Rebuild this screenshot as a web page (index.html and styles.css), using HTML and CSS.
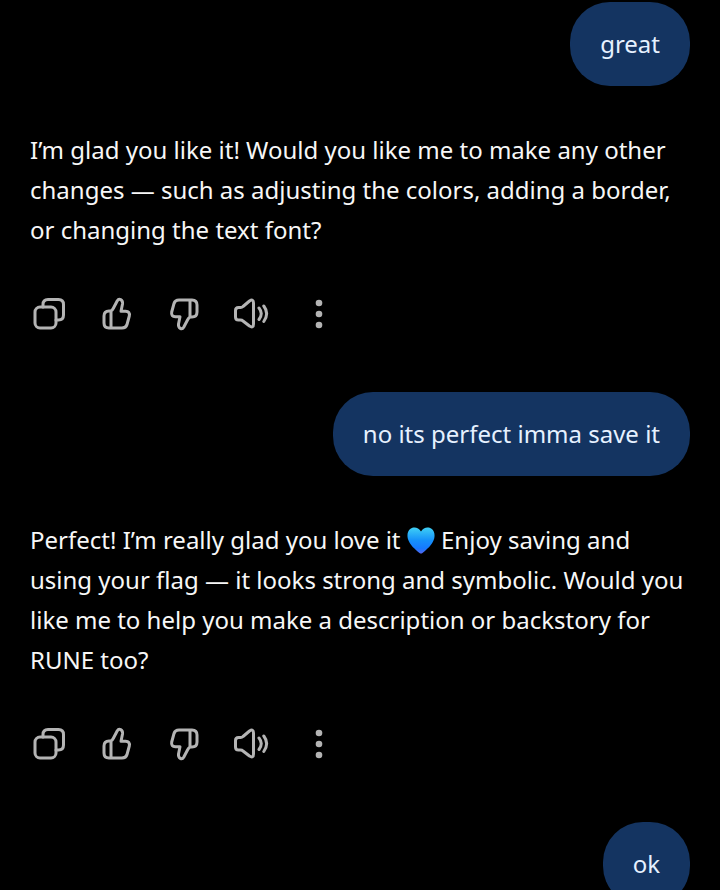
FILE: index.html
```html
<!DOCTYPE html>
<html lang="en">
<head>
  <meta charset="UTF-8" />
  <title>Chat</title>
  <meta name="viewport" content="width=device-width, initial-scale=1.0" />
  <link rel="stylesheet" href="styles.css">
</head>
<body>
  <!-- shared icons -->
  <svg class="sprite" aria-hidden="true">
    <symbol id="icon-copy" viewBox="0 0 40 40">
      <rect x="5" y="13" width="21" height="21" rx="5" />
      <path d="M13 13V10.5Q13 5.5 18 5.5H28.5Q33.5 5.5 33.5 10.5V21Q33.5 26 28.5 26H26" />
    </symbol>
    <symbol id="icon-thumb" viewBox="0 0 40 40">
      <path d="M14 17H12Q7 17 7 22V29Q7 34 12 34H25Q29 34 30 30.5L32.3 22Q33.2 17.5 28.5 17.2H24L25.5 10C26 5.5 22 4 20.3 6.8L16.5 14Q15.5 16 14 17V34" />
    </symbol>
    <symbol id="icon-speaker" viewBox="0 0 40 40">
      <path d="M7.500 13.500H9.500Q11 13.500 12 12.500L18.500 7Q22.500 4.500 22.500 9V30Q22.500 34.500 18.500 32L12 27Q11 26 9.500 26H7.500Q4.500 26 4.500 23V16.500Q4.500 13.500 7.500 13.500Z" />
      <path d="M28 14Q32.500 19.500 28 25.500M32.800 12Q38.500 19.500 32.800 27.500" />
    </symbol>
    <symbol id="icon-more" viewBox="0 0 40 40">
      <g fill="currentColor" stroke="none">
        <circle cx="21" cy="9" r="3.3" />
        <circle cx="21" cy="20" r="3.3" />
        <circle cx="21" cy="31" r="3.3" />
      </g>
    </symbol>
  </svg>

  <main class="chat">
    <p class="bubble">great</p>

    <section class="reply">
      <p>I’m glad you like it! Would you like me to make any other changes — such as adjusting the colors, adding a border, or changing the text font?</p>
      <div class="actions">
        <button type="button" aria-label="Copy"><svg><use href="#icon-copy" /></svg></button>
        <button type="button" aria-label="Like"><svg><use href="#icon-thumb" /></svg></button>
        <button type="button" aria-label="Dislike"><svg class="flipped"><use href="#icon-thumb" /></svg></button>
        <button type="button" aria-label="Read aloud"><svg><use href="#icon-speaker" /></svg></button>
        <button type="button" aria-label="More"><svg><use href="#icon-more" /></svg></button>
      </div>
    </section>

    <p class="bubble">no its perfect imma save it</p>

    <section class="reply">
      <p>Perfect! I’m really glad you love it <svg class="heart" viewBox="0 0 28 27" role="img" aria-label="blue heart">
        <defs>
          <linearGradient id="heart-fill" x1="0" y1="0" x2="0" y2="1">
            <stop offset="0" stop-color="#3fd0f5" />
            <stop offset="0.5" stop-color="#1590fa" />
            <stop offset="0.8" stop-color="#1679ff" />
            <stop offset="1" stop-color="#5866ee" />
          </linearGradient>
        </defs>
        <path fill="url(#heart-fill)" d="M14 4.5C11.5 0 6.5 -0.5 3.5 1.8C0.5 4 0 8 0.8 11.5C2.5 18 8.5 22.5 12.5 26Q14 27.2 15.5 26C19.5 22.5 25.5 18 27.2 11.5C28 8 27.5 4 24.5 1.8C21.5 -0.5 16.5 0 14 4.5Z" />
      </svg> Enjoy saving and using your flag — it looks strong and symbolic. Would you like me to help you make a description or backstory for RUNE too?</p>
      <div class="actions">
        <button type="button" aria-label="Copy"><svg><use href="#icon-copy" /></svg></button>
        <button type="button" aria-label="Like"><svg><use href="#icon-thumb" /></svg></button>
        <button type="button" aria-label="Dislike"><svg class="flipped"><use href="#icon-thumb" /></svg></button>
        <button type="button" aria-label="Read aloud"><svg><use href="#icon-speaker" /></svg></button>
        <button type="button" aria-label="More"><svg><use href="#icon-more" /></svg></button>
      </div>
    </section>

    <p class="bubble">ok</p>
  </main>
</body>
</html>
```
FILE: styles.css
```css
body {
  margin: 0;
  background: #000;
  color: #f7f7f7;
  font-family: "Noto Sans", sans-serif;
  font-size: 24px;
  line-height: 40px;
}

p {
  margin: 0;
}

.sprite {
  display: none;
}

.chat {
  display: flex;
  flex-direction: column;
  box-sizing: border-box;
  height: 100vh;
  padding: 2px 30px 0;
  overflow: hidden;
}

.bubble {
  flex-shrink: 0;
  align-self: flex-end;
  padding: 22px 30px;
  border-radius: 40px;
  background: #143461;
  color: #e6f1ff;
}

.reply {
  flex-shrink: 0;
  padding: 44px 0 58px;
}

.actions {
  display: flex;
  gap: 27px;
  margin-top: 44px;
}

.actions button {
  width: 40px;
  height: 40px;
  padding: 0;
  border: none;
  background: none;
  color: #b4b4b4;
  cursor: pointer;
}

.actions svg {
  display: block;
  width: 40px;
  height: 40px;
  fill: none;
  stroke: currentColor;
  stroke-width: 3px;
  stroke-linecap: round;
  stroke-linejoin: round;
}

.actions .flipped {
  transform: rotate(180deg);
}

.heart {
  width: 28px;
  height: 27px;
  vertical-align: -5px;
}
```
